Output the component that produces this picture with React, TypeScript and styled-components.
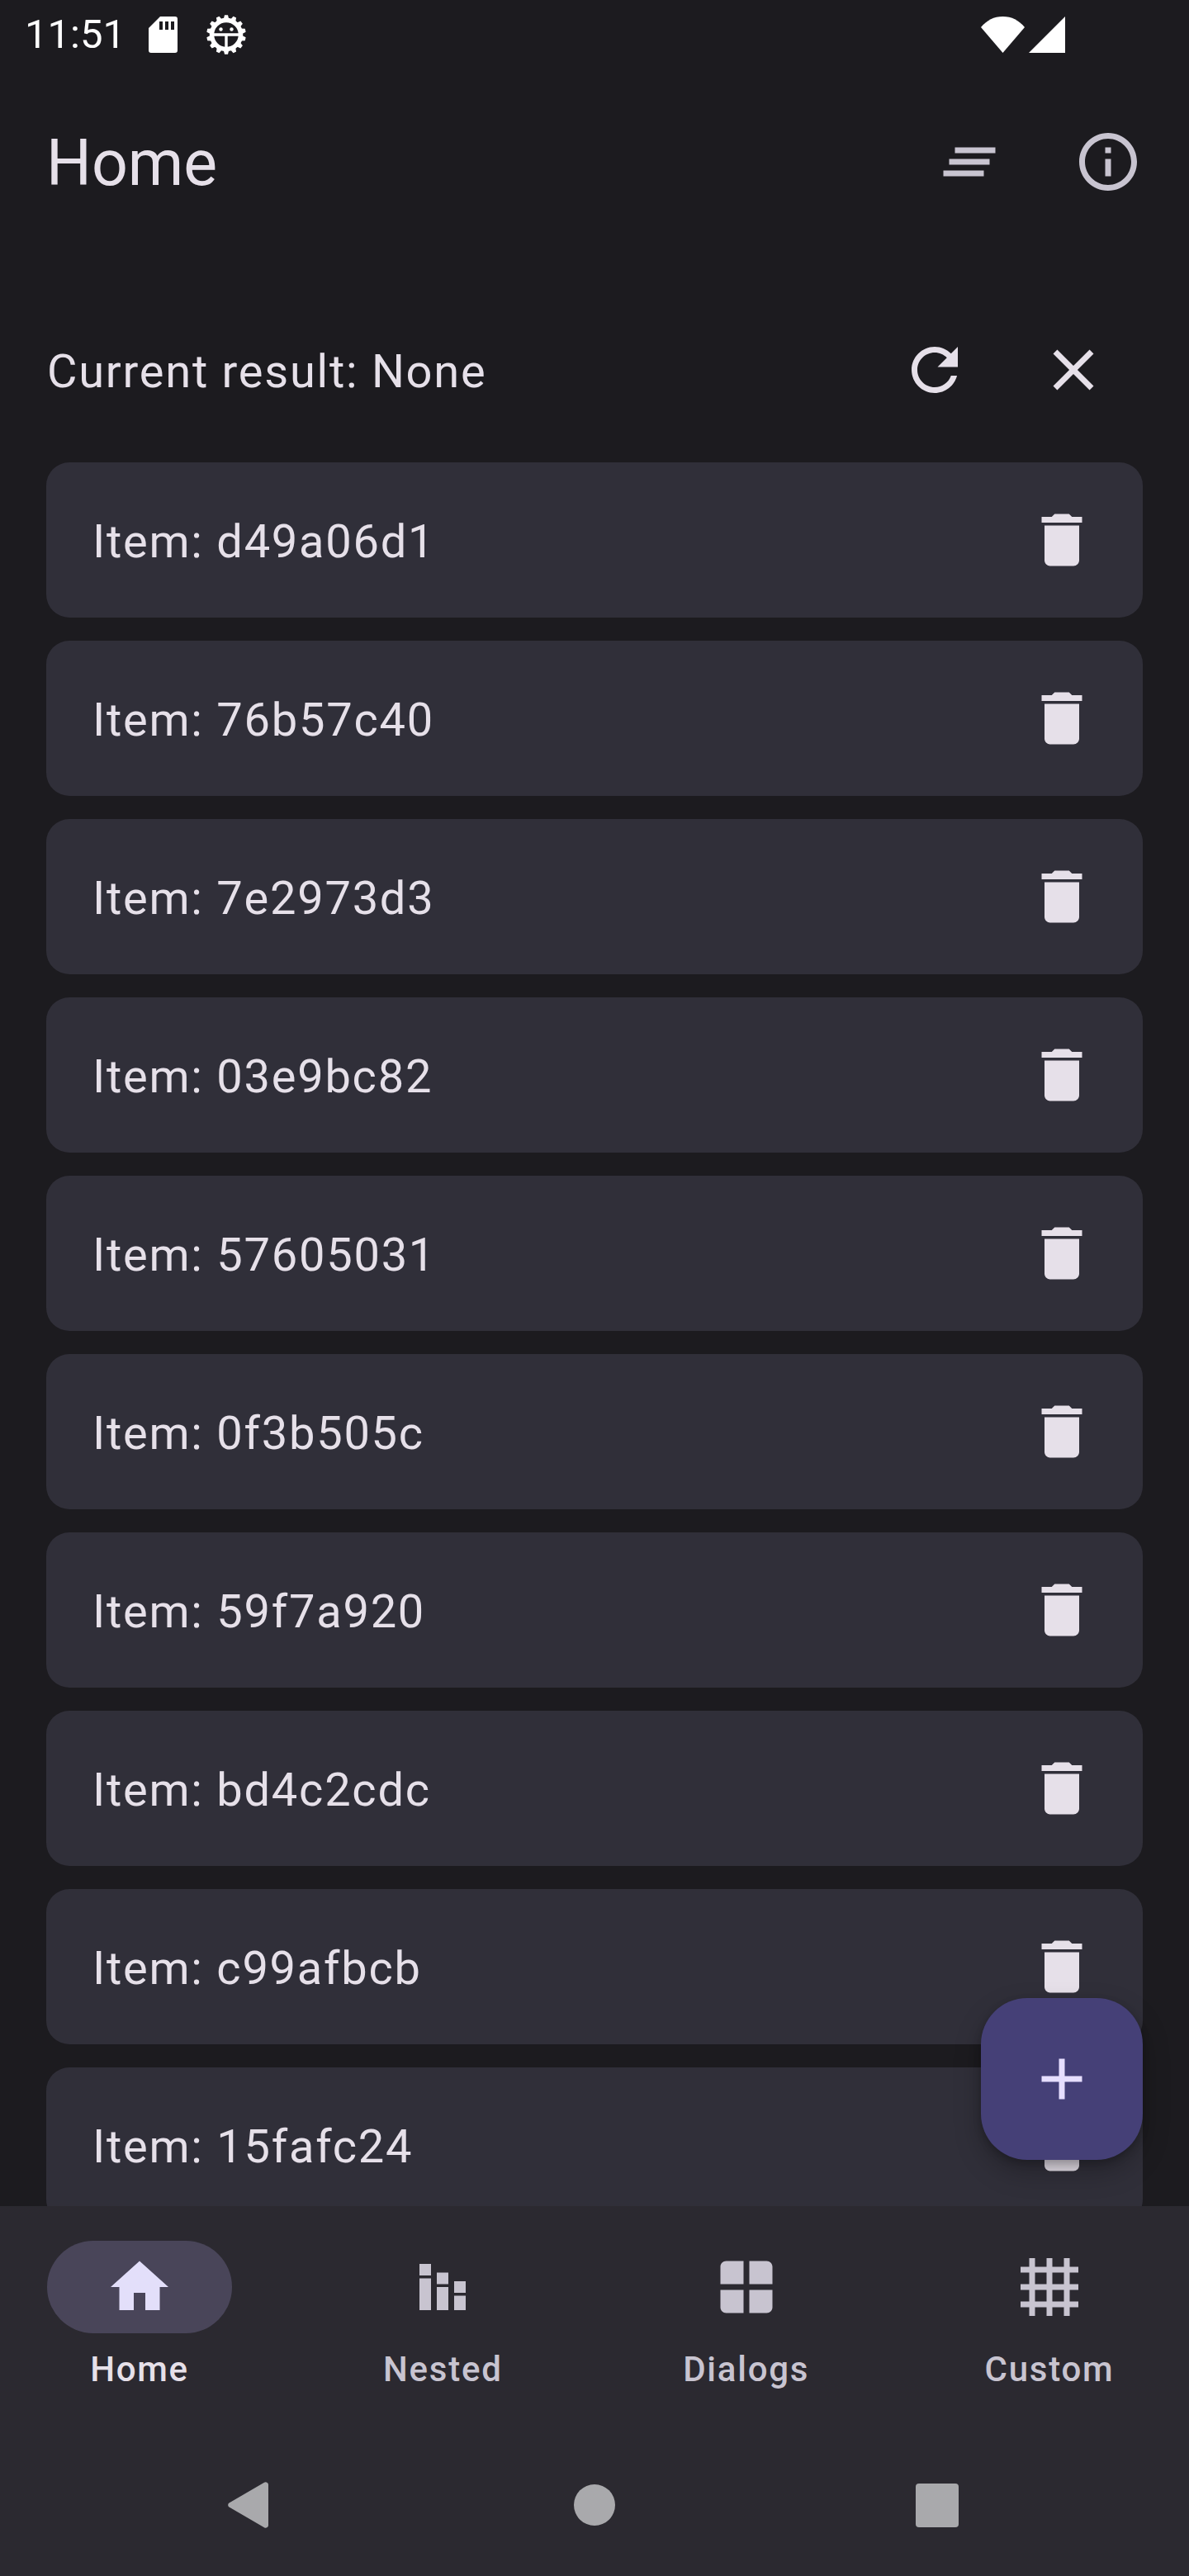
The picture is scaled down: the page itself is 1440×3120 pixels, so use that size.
import React from "react";
import styled, { createGlobalStyle } from "styled-components";

const Global = createGlobalStyle`
  html, body { margin: 0; padding: 0; background: #1c1b1f; }
  * { box-sizing: border-box; }
`;

const Screen = styled.div`
  position: relative;
  width: 1440px;
  height: 3120px;
  overflow: hidden;
  display: flex;
  flex-direction: column;
  background: #1c1b1f;
  font-family: Roboto, "Liberation Sans", sans-serif;
`;

const StatusBar = styled.div`
  height: 84px;
  flex: none;
  display: flex;
  align-items: center;
  padding: 0 150px 0 30px;
  color: #fff;
`;
const Clock = styled.span`
  font-size: 49px;
  line-height: 84px;
  width: 150px;
`;
const StatusIcon = styled.svg<{ $gap?: number }>`
  display: block;
  flex: none;
  margin-right: ${(p) => p.$gap ?? 0}px;
`;
const Spacer = styled.div`
  flex: 1;
`;

const AppBar = styled.header`
  height: 224px;
  flex: none;
  display: flex;
  align-items: center;
  padding: 0 56px;
`;
const Title = styled.h1`
  margin: 4px 0 0;
  flex: 1;
  font-size: 77px;
  font-weight: 400;
  color: #e6e0e9;
`;
const Icon = styled.svg<{ $color?: string }>`
  display: block;
  flex: none;
  width: 84px;
  height: 84px;
  fill: ${(p) => p.$color ?? "#c8c4d0"};
`;
const IconGroup = styled.div<{ $gap: number; $shift: number }>`
  display: flex;
  gap: ${(p) => p.$gap}px;
  margin-right: ${(p) => p.$shift}px;
`;

const ResultRow = styled.div`
  flex: none;
  height: 112px;
  margin-top: 84px;
  display: flex;
  align-items: center;
  padding: 0 56px 0 57px;
`;
const ResultText = styled.span`
  flex: 1;
  font-size: 56px;
  letter-spacing: 1.75px;
  color: #e6e0e9;
  margin-top: 4px;
`;

const Content = styled.main`
  flex: 1;
  min-height: 0;
  overflow: hidden;
  display: flex;
  flex-direction: column;
  gap: 28px;
  padding: 56px 56px 0;
`;
const Card = styled.div`
  flex: none;
  height: 188px;
  border-radius: 28px;
  background: #302f39;
  display: flex;
  align-items: center;
  justify-content: space-between;
  padding: 0 56px;
`;
const ItemText = styled.span`
  font-size: 56px;
  letter-spacing: 1.75px;
  color: #e6e0e9;
  margin-top: 3px;
`;

const Fab = styled.button`
  position: absolute;
  left: 1188px;
  top: 2420px;
  width: 196px;
  height: 196px;
  border: none;
  border-radius: 56px;
  background: #454077;
  display: flex;
  align-items: center;
  justify-content: center;
  padding: 0;
  box-shadow: 0 14px 32px rgba(0, 0, 0, 0.26), 0 4px 10px rgba(0, 0, 0, 0.2);
`;

const BottomNav = styled.nav`
  flex: none;
  height: 448px;
  background: #2b2930;
  display: flex;
  flex-direction: column;
`;
const Tabs = styled.div`
  display: flex;
  justify-content: space-between;
  padding: 42px 56px 0;
`;
const Tab = styled.div`
  width: 226px;
  display: flex;
  flex-direction: column;
  align-items: center;
`;
const Pill = styled.div<{ $active?: boolean }>`
  width: 224px;
  height: 112px;
  border-radius: 56px;
  background: ${(p) => (p.$active ? "#494559" : "transparent")};
  display: flex;
  align-items: center;
  justify-content: center;
`;
const TabLabel = styled.span<{ $active?: boolean }>`
  margin-top: 16px;
  font-size: 42px;
  line-height: 56px;
  font-weight: 500;
  letter-spacing: 1.75px;
  color: ${(p) => (p.$active ? "#e6e0e9" : "#c8c4d0")};
`;

const SystemNav = styled.div`
  display: flex;
  align-items: center;
  height: 56px;
  margin-top: 108px;
  padding-left: 276px;
`;
const NavGlyph = styled.svg<{ $gap?: number }>`
  display: block;
  flex: none;
  fill: #a9a9ac;
  margin-right: ${(p) => p.$gap ?? 0}px;
`;

const ITEMS = [
  "d49a06d1",
  "76b57c40",
  "7e2973d3",
  "03e9bc82",
  "57605031",
  "0f3b505c",
  "59f7a920",
  "bd4c2cdc",
  "c99afbcb",
  "15fafc24",
];

const TrashPath =
  "M6 19c0 1.1.9 2 2 2h8c1.1 0 2-.9 2-2V7H6v12zM19 4h-3.5l-1-1h-5l-1 1H5v2h14V4z";

const GEAR_TEETH = Array.from({ length: 14 }, (_, i) => (i * 360) / 14);

export default function App() {
  return (
    <Screen>
      <Global />
      <StatusBar>
        <Clock>11:51</Clock>
        <StatusIcon width="35" height="44" viewBox="0 0 35 44" fill="#fff" $gap={34}>
          <path
            fillRule="evenodd"
            d="M14 0H32a3 3 0 0 1 3 3V41a3 3 0 0 1-3 3H3a3 3 0 0 1-3-3V14ZM13 6V16H17V6ZM20 6V16H24V6ZM27 6V16H31V6Z"
          />
        </StatusIcon>
        <StatusIcon width="50" height="50" viewBox="0 0 50 50">
          {GEAR_TEETH.map((a) => (
            <path key={a} d="M21.5 7L23 1.2H27L28.5 7Z" fill="#fff" transform={`rotate(${a} 25 25)`} />
          ))}
          <circle cx="25" cy="25" r="17.5" fill="none" stroke="#fff" strokeWidth="5.5" />
          <path d="M9 25H41M25 25V42" stroke="#fff" strokeWidth="3.4" fill="none" />
          <circle cx="18.5" cy="18.5" r="2.2" fill="#fff" />
          <circle cx="31.5" cy="18.5" r="2.2" fill="#fff" />
        </StatusIcon>
        <Spacer />
        <StatusIcon width="53" height="44" viewBox="0 0 53 44" fill="#fff" $gap={5}>
          <path d="M26.5 44L0 13C7 4.5 16 0 26.5 0S46 4.5 53 13Z" />
        </StatusIcon>
        <StatusIcon width="44" height="44" viewBox="0 0 44 44" fill="#fff">
          <path d="M44 0V44H0Z" />
        </StatusIcon>
      </StatusBar>

      <AppBar>
        <Title>Home</Title>
        <IconGroup $gap={84} $shift={0}>
          <Icon viewBox="0 0 24 24">
            <path d="M7 7h14v2H7zM5 11h14v2H5zM3 15h14v2H3z" />
          </Icon>
          <Icon viewBox="0 0 24 24">
            <path d="M11 7h2v2h-2zm0 4h2v6h-2zm1-9C6.48 2 2 6.48 2 12s4.48 10 10 10 10-4.48 10-10S17.52 2 12 2zm0 18c-4.41 0-8-3.59-8-8s3.59-8 8-8 8 3.59 8 8-3.59 8-8 8z" />
          </Icon>
        </IconGroup>
      </AppBar>

      <ResultRow>
        <ResultText>Current result: None</ResultText>
        <IconGroup $gap={84} $shift={42}>
          <Icon viewBox="0 0 24 24" $color="#e6e0e9">
            <path d="M17.65 6.35C16.2 4.9 14.21 4 12 4c-4.42 0-7.99 3.58-7.99 8s3.57 8 7.99 8c3.73 0 6.84-2.55 7.73-6h-2.08c-.82 2.33-3.04 4-5.65 4-3.31 0-6-2.69-6-6s2.69-6 6-6c1.66 0 3.14.69 4.22 1.78L13 11h7V4l-2.35 2.35z" />
          </Icon>
          <Icon viewBox="0 0 24 24" $color="#e6e0e9">
            <path d="M19 6.41 17.59 5 12 10.59 6.41 5 5 6.41 10.59 12 5 17.59 6.41 19 12 13.41 17.59 19 19 17.59 13.41 12z" />
          </Icon>
        </IconGroup>
      </ResultRow>

      <Content>
        {ITEMS.map((id) => (
          <Card key={id}>
            <ItemText>Item: {id}</ItemText>
            <Icon viewBox="0 0 24 24" $color="#e6e0e9">
              <path d={TrashPath} />
            </Icon>
          </Card>
        ))}
      </Content>

      <Fab aria-label="Add">
        <Icon viewBox="0 0 24 24" $color="#e6deff">
          <path d="M19 13h-6v6h-2v-6H5v-2h6V5h2v6h6v2z" />
        </Icon>
      </Fab>

      <BottomNav>
        <Tabs>
          <Tab>
            <Pill $active>
              <Icon viewBox="0 0 24 24" $color="#e3dffa">
                <path d="M10 20v-6h4v6h5v-8h3L12 3 2 12h3v8z" />
              </Icon>
            </Pill>
            <TabLabel $active>Home</TabLabel>
          </Tab>
          <Tab>
            <Pill>
              <Icon viewBox="0 0 24 24">
                <path d="M4 4h4v4H4zM4 9h4v11H4zM10 7h4v4h-4zM10 12h4v8h-4zM16 10h4v4h-4zM16 15h4v5h-4z" />
              </Icon>
            </Pill>
            <TabLabel>Nested</TabLabel>
          </Tab>
          <Tab>
            <Pill>
              <Icon viewBox="0 0 24 24">
                <path d="M11 3H5C3.9 3 3 3.9 3 5v6h8zM13 3v8h8V5c0-1.1-.9-2-2-2zM3 13v6c0 1.1.9 2 2 2h6v-8zM13 13v8h6c1.1 0 2-.9 2-2v-6z" />
              </Icon>
            </Pill>
            <TabLabel>Dialogs</TabLabel>
          </Tab>
          <Tab>
            <Pill>
              <Icon viewBox="0 0 24 24">
                <path
                  fillRule="evenodd"
                  d="M22 7V5h-3V2h-2v3h-4V2h-2v3H7V2H5v3H2v2h3v4H2v2h3v4H2v2h3v3h2v-3h4v3h2v-3h4v3h2v-3h3v-2h-3v-4h3v-2h-3V7zM7 7h4v4H7zM7 17v-4h4v4zM17 17h-4v-4h4zM17 11h-4V7h4z"
                />
              </Icon>
            </Pill>
            <TabLabel>Custom</TabLabel>
          </Tab>
        </Tabs>
        <SystemNav>
          <NavGlyph width="49" height="56" viewBox="0 0 49 56" $gap={370}>
            <path d="M1.5 30.5a3 3 0 0 1 0-5L44 .8A3.2 3.2 0 0 1 49 3.5v49a3.2 3.2 0 0 1-5 2.7Z" />
          </NavGlyph>
          <NavGlyph width="50" height="50" viewBox="0 0 50 50" $gap={364}>
            <circle cx="25" cy="25" r="25" />
          </NavGlyph>
          <NavGlyph width="52" height="53" viewBox="0 0 52 53">
            <rect width="52" height="53" rx="4" />
          </NavGlyph>
        </SystemNav>
      </BottomNav>
    </Screen>
  );
}
